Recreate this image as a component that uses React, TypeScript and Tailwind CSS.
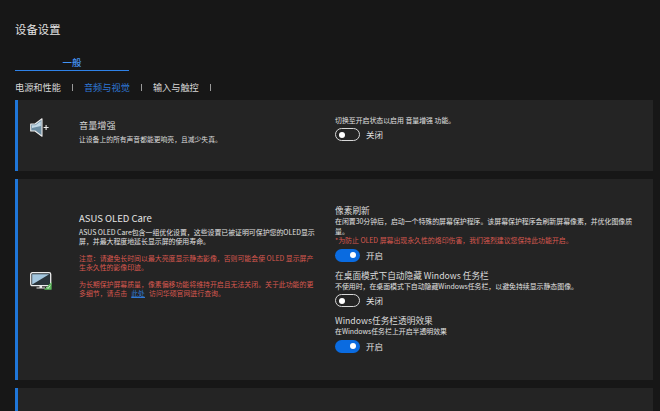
import React from "react";

const font = { fontFamily: '"Noto Sans CJK SC", "Noto Sans", sans-serif' };

function Toggle({ on }: { on: boolean }) {
  return (
    <div className="flex items-center gap-[6px] h-[13px]">
      {on ? (
        <div className="w-[25px] h-[13px] rounded-full bg-[#0a6be0] flex items-center justify-end pr-[4px]">
          <div className="w-[6px] h-[6px] rounded-full bg-white" />
        </div>
      ) : (
        <div className="w-[25px] h-[13px] rounded-full border border-[#d8d8d8] flex items-center pl-[3px]">
          <div className="w-[6px] h-[6px] rounded-full bg-white" />
        </div>
      )}
      <span className="text-[8.5px] leading-[13px] text-[#e0e0e0]">{on ? "开启" : "关闭"}</span>
    </div>
  );
}

function Speaker() {
  return (
    <svg width="19" height="19" viewBox="0 0 19 19" fill="none">
      <path d="M0.7 6 L5 6 L12 0.8 L12 18.2 L5 13 L0.7 13 Z" fill="#6d8ea3" stroke="#ececec" strokeWidth="1.1" strokeLinejoin="round" />
      <path d="M2 7.2 L5.4 7.2 L10.8 3.2 L10.8 8 L2 10 Z" fill="#c3dae8" />
      <path d="M13.6 9.5 H18.6 M16.1 7 V12" stroke="#ececec" strokeWidth="1.1" />
    </svg>
  );
}

function Monitor() {
  return (
    <svg width="22" height="18" viewBox="0 0 22 18" fill="none">
      <rect x="0.7" y="0.7" width="20" height="13" rx="1.6" fill="#2a343b" stroke="#ececec" strokeWidth="1.3" />
      <path d="M2.2 12.4 L2.2 2.2 L19.2 2.2 Z" fill="#a3c6de" />
      <path d="M9.5 14 H12 V15.6 H15 V16.4 H6.5 V15.6 H9.5 Z" fill="#e6e6e6" />
      <path d="M14 17.8 L21 17.8 Q21.6 17.8 21.6 17.2 L21.6 10 Z" fill="#5cb85c" />
      <path d="M16.5 15 L18 16.5 L20.3 13.5" stroke="#e8f5e8" strokeWidth="0.8" fill="none" />
    </svg>
  );
}

function Setting({ title, desc, warn, on, extra }: { title: string; desc: string; warn?: string; on: boolean; extra?: string }) {
  return (
    <div className={extra}>
      <div className="text-[8.7px] leading-[13px] text-[#dcdcdc]">{title}</div>
      <div className="text-[6.9px] leading-[9.5px] text-[#e0e0e0]">{desc}</div>
      {warn && <div className="text-[6.9px] leading-[9.5px] text-[#d8584f]">{warn}</div>}
      <div className="mt-[3px]">
        <Toggle on={on} />
      </div>
    </div>
  );
}

export default function App() {
  return (
    <div style={font} className="w-[660px] h-[411px] overflow-hidden bg-[#171717] pl-[15px] pr-[7px] pt-[21px]">
      <h1 className="text-[11.3px] leading-[16px] text-[#e4e4e4] tracking-[0.1px]">设备设置</h1>

      <div className="mt-[18px] w-[114px] h-[16px] border-b-[1.5px] border-[#2f82e8] text-center">
        <span className="text-[9.4px] font-medium leading-[14px] block text-[#4494f5]">一般</span>
      </div>

      <div className="mt-[10px] flex items-center h-[13px] text-[9.2px] leading-[13px]">
        <span className="text-[#d8d8d8]">电源和性能</span>
        <span className="ml-[11px] w-px h-[7px] bg-[#9a9a9a]" />
        <span className="ml-[11px] text-[#2f78d6]">音频与视觉</span>
        <span className="ml-[11px] w-px h-[7px] bg-[#9a9a9a]" />
        <span className="ml-[11px] text-[#d8d8d8]">输入与触控</span>
        <span className="ml-[11px] w-px h-[7px] bg-[#9a9a9a]" />
      </div>

      <section className="mt-[6px] h-[71px] bg-[#242424] border-l-[3px] border-[#1f76d8] flex">
        <div className="w-[61px] shrink-0 pl-[12px] pt-[18px]">
          <Speaker />
        </div>
        <div className="w-[256px] shrink-0 pt-[19px]">
          <div className="text-[9.2px] leading-[13px] text-[#d4d4d4]">音量增强</div>
          <div className="text-[6.8px] leading-[10px] mt-[2px] text-[#dcdcdc]">让设备上的所有声音都能更响亮，且减少失真。</div>
        </div>
        <div className="pt-[15px]">
          <div className="text-[6.9px] leading-[10px] text-[#e0e0e0]">切换至开启状态以启用 音量增强 功能。</div>
          <div className="mt-[3px]">
            <Toggle on={false} />
          </div>
        </div>
      </section>

      <section className="mt-[8px] h-[201px] bg-[#242424] border-l-[3px] border-[#1f76d8] flex">
        <div className="w-[61px] shrink-0 pl-[12px] pt-[93px]">
          <Monitor />
        </div>
        <div className="w-[256px] shrink-0 pt-[32px] pr-[18px]">
          <div className="text-[9.5px] leading-[14px] text-[#e4e4e4]">ASUS OLED Care</div>
          <div className="mt-[3px] text-[6.9px] leading-[9px] text-[#e0e0e0]">
            ASUS OLED Care包含一组优化设置，这些设置已被证明可保护您的OLED显示屏，并最大程度地延长显示屏的使用寿命。
          </div>
          <div className="mt-[8px] text-[6.9px] leading-[9px] text-[#d8584f]">
            注意：请避免长时间以最大亮度显示静态影像，否则可能会使 OLED 显示屏产生永久性的影像印迹。
          </div>
          <div className="mt-[8px] text-[6.9px] leading-[9px] text-[#d8584f]">
            <div>为长期保护屏幕质量，像素偏移功能将维持开启且无法关闭。关于此功能的更</div>
            <div className="flex gap-[4px]">
              <span>多细节，请点击</span>
              <span className="text-[#2f78d6] underline">此处</span>
              <span>访问华硕官网进行查询。</span>
            </div>
          </div>
        </div>
        <div className="w-[300px] shrink-0 pt-[25px]">
          <Setting
            title="像素刷新"
            desc="在闲置30分钟后，启动一个特殊的屏幕保护程序。该屏幕保护程序会刷新屏幕像素，并优化图像质量。"
            warn="*为防止 OLED 屏幕出现永久性的烙印伤害，我们强烈建议您保持此功能开启。"
            on
          />
          <Setting
            extra="mt-[7px]"
            title="在桌面模式下自动隐藏 Windows 任务栏"
            desc="不使用时，在桌面模式下自动隐藏Windows任务栏，以避免持续显示静态图像。"
            on={false}
          />
          <Setting
            extra="mt-[7px]"
            title="Windows任务栏透明效果"
            desc="在Windows任务栏上开启半透明效果"
            on
          />
        </div>
      </section>

      <section className="mt-[8px] h-[60px] bg-[#242424] border-l-[3px] border-[#1f76d8]" />
    </div>
  );
}
